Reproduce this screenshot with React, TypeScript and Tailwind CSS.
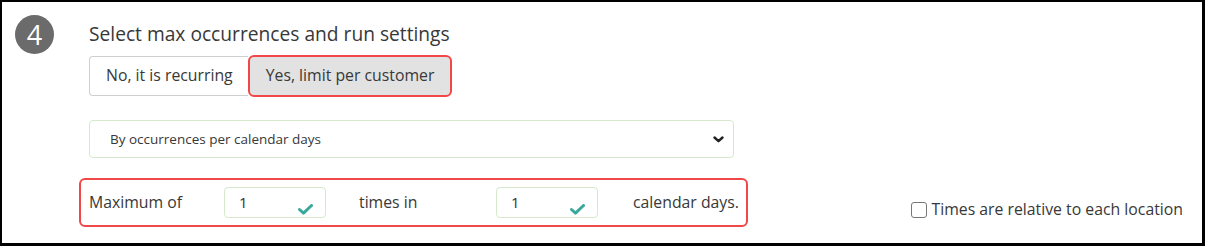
import React from 'react';

const Check = () => (
    <svg width="15" height="11" viewBox="0 0 15 11" className="shrink-0">
        <path d="M1.5 5.5 L5.5 9.2 L13.5 1.5" fill="none" stroke="#3aa99d" strokeWidth="3" strokeLinecap="round" strokeLinejoin="round" />
    </svg>
);

const NumberBox = ({ value }: { value: string }) => (
    <div className="w-[102px] h-[31px] border border-[#d6e9cc] rounded-[4px] flex items-start justify-between pl-[14px] pr-[12px]">
        <span className="text-[15px] leading-[28px] text-[#333]">{value}</span>
        <div className="pt-[16px]">
            <Check />
        </div>
    </div>
);

export default function App() {
    return (
        <div className="w-[1205px] h-[246px] box-border bg-white border-l-2 border-t-2 border-r-[3px] border-b-[3px] border-black pl-[13px] pt-[13px] pr-[19px] flex items-start font-['Open_Sans',sans-serif] text-[#383838]">
            {/* step badge */}
            <div className="w-[39px] h-[39px] shrink-0 rounded-full bg-[#6b6b6b] text-white text-[27px] leading-none flex items-center justify-center">
                4
            </div>

            <div className="ml-[35px] flex-1 flex flex-col">
                <h2 className="mt-[6px] text-[19.2px] leading-[26px] font-normal">Select max occurrences and run settings</h2>

                {/* toggle */}
                <div className="mt-[8px] flex items-stretch h-[42px]">
                    <button className="my-[1px] border border-r-0 border-[#cfcfcf] rounded-l-[4px] bg-white pl-[16px] pr-[15px] text-[15.8px]">
                        No, it is recurring
                    </button>
                    <button className="border-2 border-[#f04848] rounded-[6px] bg-[#e2e2e2] pl-[16px] pr-[16px] text-[15.8px]">
                        Yes, limit per customer
                    </button>
                </div>

                {/* mode select */}
                <div className="mt-[23px] w-[645px] h-[38px] border border-[#d6e9cc] rounded-[4px] flex items-center justify-between pl-[20px] pr-[9px]">
                    <span className="text-[13.5px]">By occurrences per calendar days</span>
                    <svg width="11" height="7" viewBox="0 0 11 7">
                        <path d="M1.5 1.5 L5.5 5.2 L9.5 1.5" fill="none" stroke="#222" strokeWidth="2.4" strokeLinecap="round" strokeLinejoin="round" />
                    </svg>
                </div>

                {/* limits */}
                <div className="mt-[20px] -ml-[10px] flex items-start justify-between">
                    <div className="h-[49px] border-2 border-[#f04848] rounded-[6px] flex items-center pl-[8px] pr-[7px] text-[15.8px]">
                        <span className="w-[135px]">Maximum of</span>
                        <NumberBox value="1" />
                        <span className="w-[170px] pl-[33px]">times in</span>
                        <NumberBox value="1" />
                        <span className="pl-[35px]">calendar days.</span>
                    </div>

                    <label className="mt-[20px] flex items-center gap-[5px] text-[15.8px]">
                        <span className="w-[16px] h-[16px] border-[1.5px] border-[#777] rounded-[3px] bg-white" />
                        Times are relative to each location
                    </label>
                </div>
            </div>
        </div>
    );
}
